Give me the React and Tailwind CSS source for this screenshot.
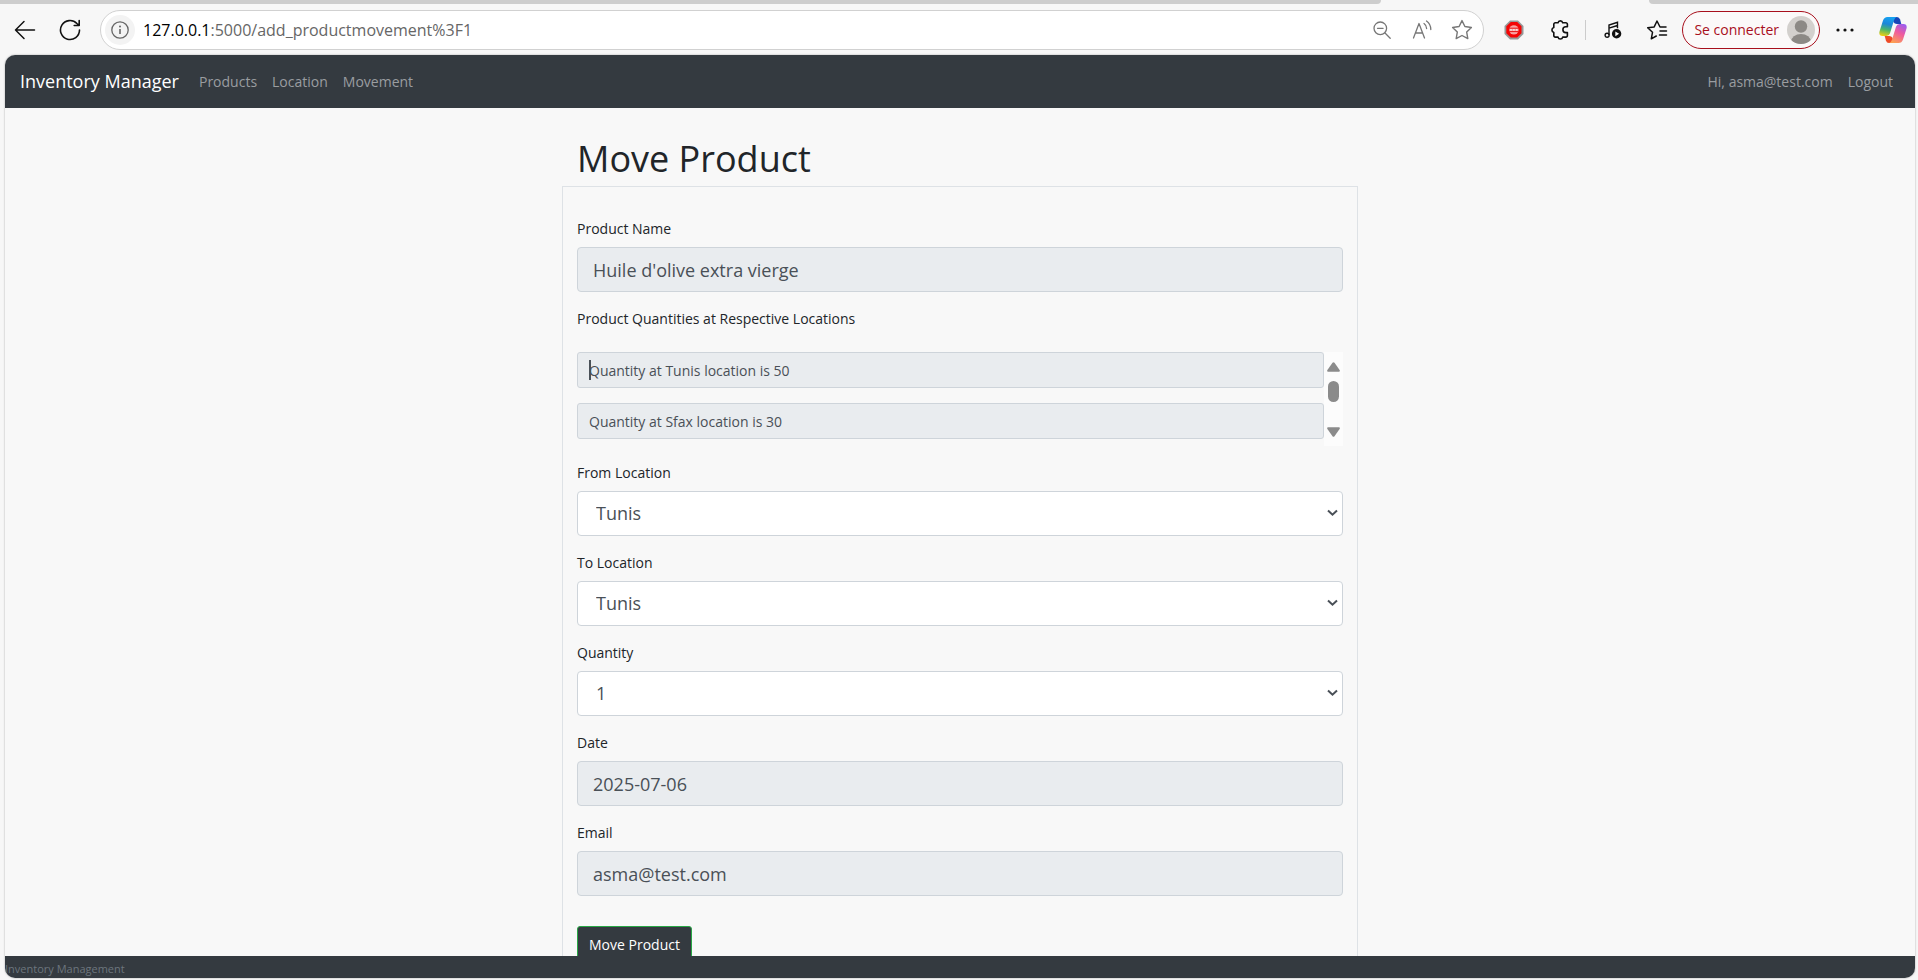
import React from "react";

const label = "mb-[7px] block text-[14px] leading-[22px] text-[#212529]";
const field =
  "block h-[45px] w-full rounded-[4px] border border-[#ced4da] text-[18px] text-[#495057] outline-none";
const smallField =
  "block h-9 w-full rounded-[3px] border border-[#ced4da] bg-[#e9ecef] px-[11px] text-[14px] text-[#495057] outline-none";

function TextField({ id, title, value }) {
  return (
    <div>
      <label htmlFor={id} className={label}>{title}</label>
      <input id={id} readOnly defaultValue={value} className={`${field} bg-[#e9ecef] px-[15px]`} />
    </div>
  );
}

function SelectField({ id, title, options }) {
  return (
    <div>
      <label htmlFor={id} className={label}>{title}</label>
      <div className="relative">
        <select id={id} className={`${field} appearance-none bg-white px-[18px]`}>
          {options.map((o) => (
            <option key={o}>{o}</option>
          ))}
        </select>
        <svg className="pointer-events-none absolute right-[5px] top-[18px]" width="11" height="8" viewBox="0 0 11 8" fill="none" stroke="#495057" strokeWidth="2">
          <path d="M1 1.5 5.5 5.7 10 1.5" />
        </svg>
      </div>
    </div>
  );
}

const iconBtn = "flex h-8 w-8 shrink-0 items-center justify-center";
const starPath = "M12 2.6l2.9 5.9 6.5.95-4.7 4.6 1.1 6.5L12 17.5l-5.8 3.05 1.1-6.5-4.7-4.6 6.5-.95z";

function Toolbar() {
  return (
    <header className="flex h-[45px] items-center pr-[9px]">
      <button aria-label="Back" className="ml-[9px] flex h-8 w-8 items-center justify-center">
        <svg width="22" height="20" viewBox="0 0 22 20" fill="none" stroke="#111" strokeWidth="1.5" strokeLinecap="round" strokeLinejoin="round">
          <path d="M20.5 10H1.5M10 1.5 1.5 10l8.5 8.5" />
        </svg>
      </button>
      <button aria-label="Refresh" className="ml-[13px] flex h-8 w-8 items-center justify-center">
        <svg width="22" height="22" viewBox="0 0 22 22" fill="none" stroke="#111" strokeWidth="1.6" strokeLinecap="round" strokeLinejoin="round">
          <path d="M20.5 11a9.5 9.5 0 1 1-2.6-6.5L20 6.4M20.200 1.500v5h-5" />
        </svg>
      </button>
      <div className="ml-[14px] flex h-10 flex-1 items-center rounded-full border border-[#d1d1d1] bg-white pl-1 pr-[5px]">
        <button aria-label="Site information" className="flex h-[30px] w-[30px] items-center justify-center rounded-full bg-[#f3f3f3]">
          <svg width="18" height="18" viewBox="0 0 18 18" fill="none" stroke="#666" strokeWidth="1.3">
            <circle cx="9" cy="9" r="8.2" />
            <path d="M9 8v5" strokeWidth="1.6" />
            <circle cx="9" cy="5.5" r="1" fill="#666" stroke="none" />
          </svg>
        </button>
        <p className="ml-2 flex-1 text-[16px] text-[#666]"><span className="text-black">127.0.0.1</span>:5000/add_productmovement%3F1</p>
        <button aria-label="Zoom" className={iconBtn}>
          <svg width="18" height="18" viewBox="0 0 18 18" fill="none" stroke="#777" strokeWidth="1.3" strokeLinecap="round">
            <circle cx="7.3" cy="7.3" r="6.3" />
            <path d="M4.5 7.300h5.600M12 12l5.200 5.200" />
          </svg>
        </button>
        <button aria-label="Read aloud" className={`${iconBtn} ml-2`}>
          <svg width="20" height="20" viewBox="0 0 20 20" fill="none" stroke="#777" strokeWidth="1.3" strokeLinecap="round" strokeLinejoin="round">
            <path d="M1.500 18 7 3.500 12.500 18M3.600 13h6.800M12 3.500q2.600 1.800 2.600 5M14.500 1q4.300 3 4.300 8.500" />
          </svg>
        </button>
        <button aria-label="Add to favorites" className={`${iconBtn} ml-2`}>
          <svg width="24" height="24" viewBox="0 0 24 24" fill="none" stroke="#777" strokeWidth="1.4" strokeLinejoin="round"><path d={starPath} /></svg>
        </button>
      </div>
      <button aria-label="Ad blocker" className={`${iconBtn} ml-[14px]`}>
        <svg width="20" height="20" viewBox="0 0 20 20">
          <path d="M6 .5h8L19.500 6v8L14 19.500H6L.5 14V6z" fill="#979797" />
          <path d="M6.800 2h6.400L17.500 6.300v7L13.200 17.600H6.800L2.300 13.300v-7z" fill="#f50505" />
          <circle cx="9.900" cy="9.900" r="4.700" fill="#f9a3a3" />
          <path d="M5.200 8.200h9.400M5.200 11.600h9.400" stroke="#e81616" strokeWidth="1" />
          <path d="M6.300 9.900h1.400M9.200 9.900h1.400M12.100 9.900h1.400" stroke="#fff" strokeWidth="1.400" />
        </svg>
      </button>
      <button aria-label="Extensions" className={`${iconBtn} ml-[14px]`}>
        <svg width="20" height="22" viewBox="0 0 20 22" fill="none" stroke="#111" strokeWidth="1.6" strokeLinejoin="round">
          <path d="M5.300 3.800H8a2.400 2.400 0 0 1 4.700 0h3.200a1.500 1.500 0 0 1 1.500 1.500v2.500h-1.600a2.900 2.900 0 0 0 0 5.800h1.600v3a1.500 1.500 0 0 1-1.500 1.500h-3.200a2.400 2.400 0 0 1-4.700 0H5.300a1.500 1.500 0 0 1-1.500-1.500v-3a2.600 2.600 0 0 1 0-5V5.300a1.500 1.500 0 0 1 1.500-1.500z" />
        </svg>
      </button>
      <span className="ml-[9px] h-5 w-px bg-[#ccc]" />
      <button aria-label="Media" className={`${iconBtn} ml-[11px]`}>
        <svg width="18" height="18" viewBox="0 0 18 18" fill="none" stroke="#111" strokeWidth="1.4">
          <path d="M5 14V4l8.500-2.700v6M5 7.200l8.500-2.700" />
          <circle cx="3.100" cy="14.300" r="2" />
          <circle cx="12.600" cy="12.800" r="4.700" fill="#111" stroke="none" />
          <path d="M11.300 10.400v4.800l3.800-2.400z" fill="#fff" stroke="none" />
        </svg>
      </button>
      <button aria-label="Favorites" className={`${iconBtn} ml-3`}>
        <svg width="22" height="22" viewBox="0 0 22 22" fill="none" stroke="#111" strokeWidth="1.5" strokeLinejoin="round" strokeLinecap="round">
          <path d="M20 8h-6L11 2 8.200 7.900l-6.500.9 4.800 4.500-1.200 6.500 5-2.800M14 12h6.500M13.500 16h7" />
        </svg>
      </button>
      <button className="ml-[9px] flex h-[38px] items-center gap-2 rounded-full border border-[#a80f1c] bg-[#fbf9f9] pl-[11px] pr-1 text-[14px] text-[#a80f1c]">
        Se connecter
        <svg width="28" height="28" viewBox="0 0 28 28">
          <defs><clipPath id="avatar"><circle cx="14" cy="14" r="14" /></clipPath></defs>
          <g clipPath="url(#avatar)">
            <rect width="28" height="28" fill="#d3d0cd" />
            <circle cx="14" cy="10.500" r="6.200" fill="#8c8985" />
            <ellipse cx="14" cy="26" rx="10" ry="8" fill="#8c8985" />
          </g>
        </svg>
      </button>
      <button aria-label="More" className={`${iconBtn} ml-[9px]`}>
        <svg width="18" height="4" viewBox="0 0 18 4" fill="#111"><circle cx="2" cy="2" r="1.6" /><circle cx="9" cy="2" r="1.6" /><circle cx="16" cy="2" r="1.6" /></svg>
      </button>
      <button aria-label="Copilot" className={`${iconBtn} ml-4`}>
        <svg width="28" height="28" viewBox="0 0 28 28">
          <defs>
            <linearGradient id="cpA" x1="0.4" y1="0" x2="0.2" y2="1"><stop offset="0" stopColor="#16a0f0" /><stop offset=".35" stopColor="#1d86d8" /><stop offset=".65" stopColor="#4cb56a" /><stop offset="1" stopColor="#f4cf10" /></linearGradient>
            <linearGradient id="cpB" x1="0.8" y1="0" x2="0.3" y2="1"><stop offset="0" stopColor="#9a5cf0" /><stop offset=".45" stopColor="#ee5aa0" /><stop offset="1" stopColor="#fda052" /></linearGradient>
          </defs>
          <path d="M14 1h4q2.300 0 3.100 2.600L22.300 8H18q-3 0-4-3z" fill="#1746b8" />
          <path d="M14 27h-4q-2.300 0-3.100-2.600L5.700 20H10q3 0 4 3z" fill="#ee4b28" />
          <path d="M8.500 1H18q-2.200.4-3 3.200l-4 13q-.9 2.800-3.600 2.800H3.500q-4-.2-3-4.500L4 4.500Q5.200 1 8.500 1z" fill="url(#cpA)" />
          <path d="M19.500 27H10q2.200-.4 3-3.200l4-13Q17.900 8 20.600 8h3.900q4 .2 3 4.500L24 23.500q-1.200 3.500-4.500 3.500z" fill="url(#cpB)" />
        </svg>
      </button>
    </header>
  );
}

export default function App() {
  return (
    <div className="flex h-screen flex-col bg-[#f7f7f7] font-['Open_Sans',sans-serif]">
      <div className="flex h-[5px] shrink-0 justify-between overflow-hidden">
        <div className="h-1 w-[72%] rounded-br-lg bg-[#cdcdcd]" />
        <div className="h-1 w-[14%] rounded-bl-lg bg-[#cdcdcd]" />
      </div>
      <div className="h-[50px] shrink-0 pt-[2px]"><Toolbar /></div>
      <div className="mb-[2px] ml-[5px] mr-[3px] flex min-h-0 flex-1 flex-col overflow-hidden rounded-[10px] bg-[#f8f8f8] shadow-[0_0_2px_rgba(0,0,0,0.35)]">
        <nav className="flex h-[53px] shrink-0 items-center bg-[#343a40] pl-[15px] pr-[22px] text-[14px] text-[#9a9da0]">
          <a href="#home" className="text-[18px] text-white">Inventory Manager</a>
          <div className="ml-5 flex flex-1 gap-[15px]">
            <a href="#products">Products</a>
            <a href="#location">Location</a>
            <a href="#movement">Movement</a>
          </div>
          <div className="flex gap-[15px]">
            <span>Hi, asma@test.com</span>
            <a href="#logout">Logout</a>
          </div>
        </nav>
        <main className="min-h-0 flex-1 overflow-hidden">
          <div className="mx-auto w-[796px] max-w-full pt-[29px]">
            <h1 className="mb-[6px] px-[15px] text-[36px] leading-[43px] text-[#212529]">Move Product</h1>
            <form className="flex flex-col gap-4 border border-[#dee2e6] px-[14px] pb-8 pt-[31px]">
              <TextField id="product" title="Product Name" value="Huile d'olive extra vierge" />
              <div>
                <p className="mb-[22px] text-[14px] leading-[22px] text-[#212529]">Product Quantities at Respective Locations</p>
                <div className="flex h-[94px]">
                  <div className="flex flex-1 flex-col gap-[15px] overflow-hidden">
                    <div className="relative">
                      <input aria-label="Quantity at Tunis" readOnly defaultValue="Quantity at Tunis location is 50" className={smallField} />
                      <span className="absolute left-3 top-2 h-5 w-[2px] bg-[#495057]" />
                    </div>
                    <input aria-label="Quantity at Sfax" readOnly defaultValue="Quantity at Sfax location is 30" className={smallField} />
                  </div>
                  <div className="flex w-[19px] flex-col items-center bg-[#fcfcfc] pt-[10px]">
                    <svg width="13" height="10" viewBox="0 0 13 10" fill="#8b8b8b"><path d="M5.5.8q1-1.200 2 0L12.600 8q.8 1.600-.8 1.800H1.200Q-.4 9.600.4 8z" /></svg>
                    <div className="mt-[9px] h-[21px] w-[11px] rounded-full bg-[#8b8b8b]" />
                    <svg className="mt-[25px]" width="13" height="10" viewBox="0 0 13 10" fill="#8b8b8b"><path d="M5.5 9.200q1 1.200 2 0L12.600 2q.8-1.600-.8-1.800H1.200Q-.4.4.4 2z" /></svg>
                  </div>
                </div>
              </div>
              <SelectField id="from" title="From Location" options={["Tunis", "Sfax"]} />
              <SelectField id="to" title="To Location" options={["Tunis", "Sfax"]} />
              <SelectField id="qty" title="Quantity" options={["1", "2", "3"]} />
              <TextField id="date" title="Date" value="2025-07-06" />
              <TextField id="email" title="Email" value="asma@test.com" />
              <button type="button" className="mt-[14px] h-9 self-start rounded-[3px] border border-[#28a745] bg-[#343a40] px-[11px] text-[14px] font-medium text-white">Move Product</button>
            </form>
          </div>
        </main>
        <footer className="h-[22px] shrink-0 bg-[#343a40] text-[11px] leading-[26px] text-[#6c757d]">Inventory Management</footer>
      </div>
    </div>
  );
}
